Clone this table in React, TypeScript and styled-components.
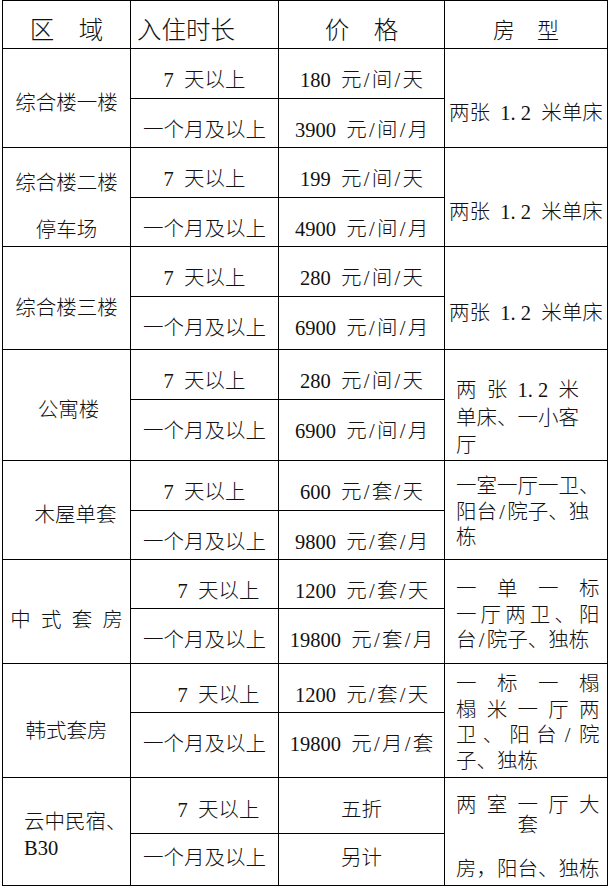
import React from 'react';
import styled, { createGlobalStyle } from 'styled-components';

const FONT = `"Liberation Serif", "Noto Sans CJK SC", serif`;

const GlobalStyle = createGlobalStyle`
  html, body { margin: 0; padding: 0; background: #ffffff; }
  body { font-family: ${FONT}; color: #000; }
`;

const Sheet = styled.div<{ $rows: string }>`
  display: grid;
  grid-template-columns: 128px 148px 166px 163px;
  grid-template-rows: ${(p) => p.$rows};
  width: max-content;
  margin-left: 2px;
  border-top: 1px solid #000;
  border-left: 1px solid #000;
  font-family: ${FONT};
  font-size: 20.5px;
  font-weight: 300;
  color: #111;
`;

const Cell = styled.div<{
  $span?: boolean;
  $align?: 'left' | 'center';
  $pt?: number;
  $pl?: number;
  $size?: number;
}>`
  box-sizing: border-box;
  border-right: 1px solid #000;
  border-bottom: 1px solid #000;
  grid-row: ${(p) => (p.$span ? 'span 2' : 'auto')};
  padding: ${(p) => p.$pt ?? 0}px 0 0 ${(p) => p.$pl ?? 0}px;
  text-align: ${(p) => p.$align ?? 'center'};
  font-size: ${(p) => p.$size ?? 20.5}px;
  white-space: nowrap;
  overflow: hidden;
`;

const TypeBox = styled.div`
  width: 143.5px;
  text-align: left;
`;

const Line = styled.div<{ $lh?: number; $mt?: number; $just?: boolean; $align?: string }>`
  line-height: ${(p) => p.$lh ?? 24}px;
  margin-top: ${(p) => p.$mt ?? 0}px;
  display: ${(p) => (p.$just ? 'flex' : 'block')};
  justify-content: space-between;
  text-align: ${(p) => p.$align ?? 'inherit'};
`;

const Half = styled.span<{ $left?: boolean }>`
  display: inline-block;
  width: 0.5em;
  text-align: ${(p) => (p.$left ? 'left' : 'center')};
`;

const fmt = (s: string) =>
  Array.from(s).map((ch, i) =>
    ch === '/' ? (
      <Half key={i}>/</Half>
    ) : ch === '.' ? (
      <Half key={i} $left>
        .
      </Half>
    ) : ch === ' ' ? (
      '\u2002'
    ) : (
      ch
    )
  );

const tokens = (s: string) =>
  Array.from(s)
    .filter((ch) => ch !== ' ')
    .map((ch, i) => (ch === '/' ? <Half key={i}>/</Half> : <span key={i}>{ch}</span>));

type L = { t: string; lh?: number; mt?: number; just?: boolean; align?: string };
type Block = { lines: L[]; pt: number; pl?: number; lh?: number; align?: 'left' | 'center' };
type Sub = { h: number; stay: string; price: string; shift?: number; pt?: number };
type Group = { area: Block; subs: Sub[]; type: Block; boxed?: boolean };

const STAY7 = '7 天以上';
const MONTH = '一个月及以上';
const TWO_BEDS = '两张 1.2 米单床';

const groups: Group[] = [
  {
    area: { lines: [{ t: '综合楼一楼' }], pt: 42 },
    subs: [
      { h: 50, stay: STAY7, price: '180 元/间/天' },
      { h: 49, stay: MONTH, price: '3900 元/间/月' },
    ],
    type: { lines: [{ t: TWO_BEDS }], pt: 52, pl: 4 },
  },
  {
    area: { lines: [{ t: '综合楼二楼', lh: 47 }, { t: '停车场', lh: 47 }], pt: 12 },
    subs: [
      { h: 50, stay: STAY7, price: '199 元/间/天' },
      { h: 49, stay: MONTH, price: '4900 元/间/月' },
    ],
    type: { lines: [{ t: TWO_BEDS }], pt: 52, pl: 4 },
  },
  {
    area: { lines: [{ t: '综合楼三楼' }], pt: 49 },
    subs: [
      { h: 50, stay: STAY7, price: '280 元/间/天' },
      { h: 53, stay: MONTH, price: '6900 元/间/月' },
    ],
    type: { lines: [{ t: TWO_BEDS }], pt: 54, pl: 4 },
  },
  {
    area: { lines: [{ t: '公寓楼' }], pt: 48, pl: 4 },
    subs: [
      { h: 50, stay: STAY7, price: '280 元/间/天' },
      { h: 61, stay: MONTH, price: '6900 元/间/月' },
    ],
    type: {
      lines: [{ t: '两 张 1.2 米' }, { t: '单床、一小客' }, { t: '厅' }],
      lh: 27.5,
      pt: 27,
      pl: 11,
    },
    boxed: true,
  },
  {
    area: { lines: [{ t: '木屋单套' }], pt: 42, pl: 18 },
    subs: [
      { h: 50, stay: STAY7, price: '600 元/套/天' },
      { h: 49, stay: MONTH, price: '9800 元/套/月' },
    ],
    type: {
      lines: [{ t: '一室一厅一卫、' }, { t: '阳台/院子、独' }, { t: '栋' }],
      lh: 25.5,
      pt: 13,
      pl: 11,
    },
    boxed: true,
  },
  {
    area: { lines: [{ t: '中 式 套 房' }], pt: 48 },
    subs: [
      { h: 49, stay: STAY7, price: '1200 元/套/天', shift: 28 },
      { h: 55, stay: MONTH, price: '19800 元/套/月' },
    ],
    type: {
      lines: [{ t: '一单一标', just: true }, { t: '一厅两卫、阳', just: true }, { t: '台/院子、独栋' }],
      lh: 25.5,
      pt: 17,
      pl: 11,
    },
    boxed: true,
  },
  {
    area: { lines: [{ t: '韩式套房' }], pt: 55 },
    subs: [
      { h: 49, stay: STAY7, price: '1200 元/套/天', shift: 28 },
      { h: 65, stay: MONTH, price: '19800 元/月/套' },
    ],
    type: {
      lines: [
        { t: '一标一榻', just: true },
        { t: '榻米一厅两', just: true },
        { t: '卫、阳台/院', just: true },
        { t: '子、独栋' },
      ],
      lh: 25.7,
      pt: 8,
      pl: 11,
    },
    boxed: true,
  },
  {
    area: { lines: [{ t: '云中民宿、', lh: 26 }, { t: 'B30', lh: 26 }], pt: 31, pl: 21, align: 'left' },
    subs: [
      { h: 56, stay: STAY7, price: '五折', shift: 28, pt: 20 },
      { h: 52, stay: MONTH, price: '另计', pt: 12 },
    ],
    type: {
      lines: [
        { t: '两室一厅大', just: true, lh: 20 },
        { t: '套', lh: 20, align: 'center' },
        { t: '房，阳台、独栋', lh: 24, mt: 22 },
      ],
      pt: 17,
      pl: 11,
    },
    boxed: true,
  },
];

const renderLines = (b: Block) =>
  b.lines.map((l, i) => (
    <Line key={i} $lh={l.lh ?? b.lh} $mt={l.mt} $just={l.just} $align={l.align}>
      {l.just ? tokens(l.t) : fmt(l.t)}
    </Line>
  ));

const headers: { t: string; size: number; align?: 'left' | 'center'; pl?: number }[] = [
  { t: '区  域', size: 24.5 },
  { t: '入住时长', size: 24.5, align: 'left', pl: 6 },
  { t: '价  格', size: 24.5 },
  { t: '房  型', size: 22 },
];

export default function App() {
  const rows = ['48px', ...groups.flatMap((g) => g.subs.map((s) => `${s.h}px`))].join(' ');
  return (
    <>
      <GlobalStyle />
      <Sheet $rows={rows}>
        {headers.map((h, i) => (
          <Cell key={i} $size={h.size} $pt={16} $align={h.align} $pl={h.pl}>
            <Line $lh={28}>{fmt(h.t)}</Line>
          </Cell>
        ))}
        {groups.map((g, gi) => (
          <React.Fragment key={gi}>
            <Cell $span $pt={g.area.pt} $pl={g.area.pl} $align={g.area.align}>
              {renderLines(g.area)}
            </Cell>
            <Cell $pt={g.subs[0].pt ?? 19} $pl={g.subs[0].shift}>
              <Line>{fmt(g.subs[0].stay)}</Line>
            </Cell>
            <Cell $pt={g.subs[0].pt ?? 19}>
              <Line>{fmt(g.subs[0].price)}</Line>
            </Cell>
            <Cell $span $pt={g.type.pt} $pl={g.type.pl} $align="left">
              {g.boxed ? <TypeBox>{renderLines(g.type)}</TypeBox> : renderLines(g.type)}
            </Cell>
            <Cell $pt={g.subs[1].pt ?? 19} $pl={g.subs[1].shift}>
              <Line>{fmt(g.subs[1].stay)}</Line>
            </Cell>
            <Cell $pt={g.subs[1].pt ?? 19}>
              <Line>{fmt(g.subs[1].price)}</Line>
            </Cell>
          </React.Fragment>
        ))}
      </Sheet>
    </>
  );
}
